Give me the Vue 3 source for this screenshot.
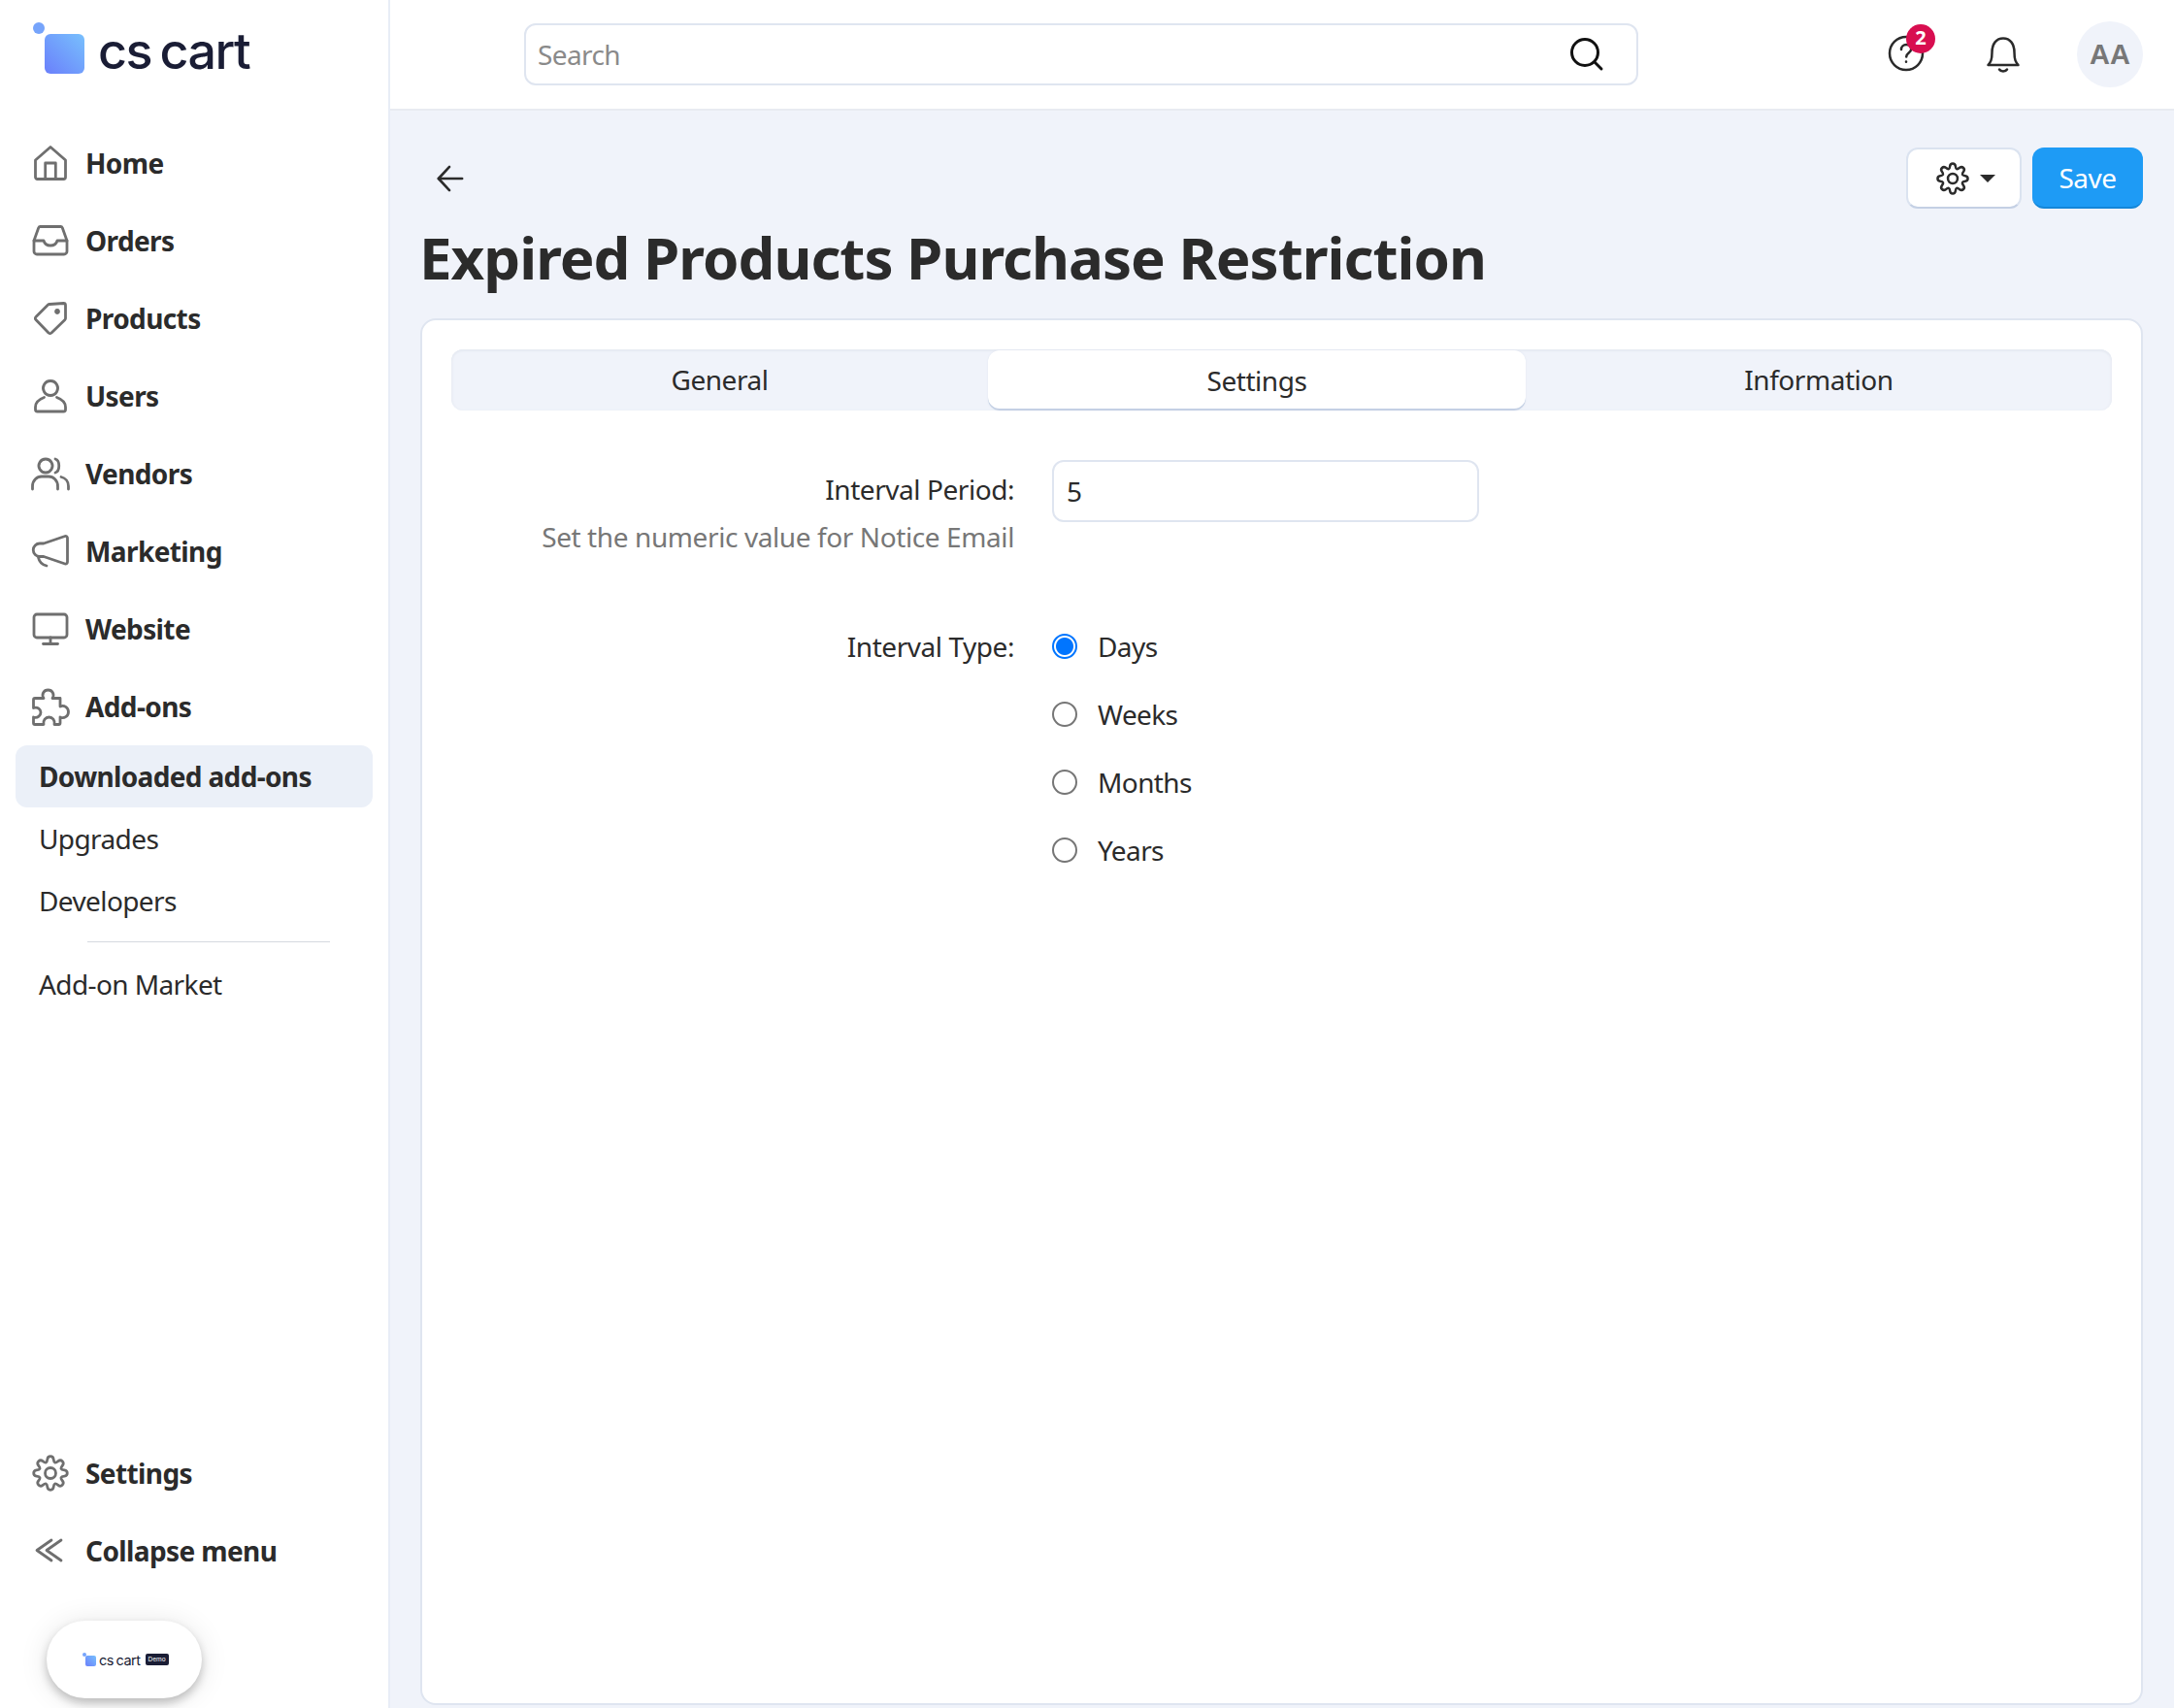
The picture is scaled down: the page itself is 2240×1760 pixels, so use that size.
<template>
  <div class="app">
    <aside class="sidebar">
      <div class="logo">
        <span class="logo-mark"><i class="dot"></i><i class="square"></i></span>
        <span class="logo-text">cs cart</span>
      </div>
      <nav>
        <a v-for="item in nav" :key="item.label" class="nav-row">
          <svg class="nav-icon" viewBox="0 0 40 40" fill="none"><path v-for="d in item.paths" :key="d" :d="d" /></svg>
          <span>{{ item.label }}</span>
        </a>
      </nav>
      <div class="sub active">Downloaded add-ons</div>
      <div class="sub">Upgrades</div>
      <div class="sub">Developers</div>
      <div class="divider"></div>
      <div class="sub">Add-on Market</div>
      <div class="side-foot">
        <a class="nav-row">
          <svg class="nav-icon" viewBox="0 0 40 40" fill="none"><path :d="gear" /><circle cx="20" cy="20" r="5.5" /></svg>
          <span>Settings</span>
        </a>
        <a class="nav-row">
          <svg class="nav-icon" viewBox="0 0 40 40" fill="none"><path d="M21 9 6 19.500 21 30" /><path d="M31 9 16 19.500 31 30" /></svg>
          <span>Collapse menu</span>
        </a>
        <div class="pill">
          <span class="mini-mark"><i class="mini-dot"></i><i class="mini-square"></i></span>
          <span class="mini-text">cs cart</span>
          <span class="mini-badge">Demo</span>
        </div>
      </div>
    </aside>
    <main class="main">
      <header class="topbar">
        <div class="search">
          <span class="search-ph">Search</span>
          <svg class="search-icon" viewBox="0 0 36 36" fill="none"><circle cx="16" cy="16" r="13.5" /><path d="m26 26 7 7" /></svg>
        </div>
        <div class="top-actions">
          <div class="help">
            <svg viewBox="0 0 40 40" fill="none" class="top-icon"><circle cx="20" cy="20" r="17" /><path d="M15 16c0-3 2.300-5 5.200-5s5 2 5 4.500c0 4-5 4-5 8" /><path d="M20 28.500v.2" /></svg>
            <b class="badge">2</b>
          </div>
          <svg viewBox="0 0 40 40" fill="none" class="top-icon bell"><path d="M4.500 31c2.500-3 4-5 4-13C8.500 9 13 3.500 20 3.500S31.500 9 31.500 18c0 8 1.500 10 4 13Z" /><path d="M16 35.500c1.500 2.500 6.500 2.500 8 0" /></svg>
          <div class="avatar">AA</div>
        </div>
      </header>
      <section class="content">
        <div class="toolbar">
          <svg class="back" viewBox="0 0 30 30" fill="none"><path d="M28 15H2" /><path d="M14 2 2 15l12 13" /></svg>
          <div class="tool-btns">
            <button class="btn-gear">
              <svg viewBox="0 0 40 40" fill="none"><path :d="gear" /><circle cx="20" cy="20" r="5.500" /></svg>
              <i class="caret"></i>
            </button>
            <button class="btn-save">Save</button>
          </div>
        </div>
        <h1>Expired Products Purchase Restriction</h1>
        <div class="card">
          <div class="tabs">
            <div class="tab">General</div>
            <div class="tab on">Settings</div>
            <div class="tab">Information</div>
          </div>
          <div class="form">
            <div class="field first">
              <div class="label">
                <div>Interval Period:</div>
                <div class="help-text">Set the numeric value for Notice Email</div>
              </div>
              <div class="input">5</div>
            </div>
            <div class="field">
              <div class="label type-label">Interval Type:</div>
              <div class="radios">
                <label v-for="(o, i) in options" :key="o" class="radio">
                  <i class="circle" :class="{ checked: i === 0 }"></i>{{ o }}
                </label>
              </div>
            </div>
          </div>
        </div>
      </section>
    </main>
  </div>
</template>

<script setup>
function cog(cx, cy, rOut, rIn, teeth) {
  const pts = []
  const step = (Math.PI * 2) / teeth
  for (let i = 0; i < teeth; i++) {
    const a = i * step - Math.PI / 2
    const w = step * 0.2
    ;[[a - w, rOut], [a + w, rOut], [a + step / 2 - w * 0.6, rIn], [a + step / 2 + w * 0.6, rIn]].forEach(([t, r]) =>
      pts.push([cx + r * Math.cos(t), cy + r * Math.sin(t)])
    )
  }
  const mid = (p, q) => [(p[0] + q[0]) / 2, (p[1] + q[1]) / 2]
  const f = (n) => n.toFixed(2)
  const start = mid(pts[pts.length - 1], pts[0])
  let d = `M${f(start[0])} ${f(start[1])}`
  pts.forEach((p, i) => {
    const m = mid(p, pts[(i + 1) % pts.length])
    d += `Q${f(p[0])} ${f(p[1])} ${f(m[0])} ${f(m[1])}`
  })
  return d + 'Z'
}
const gear = cog(20, 20, 17.5, 12, 8)
const options = ['Days', 'Weeks', 'Months', 'Years']
const nav = [
  { label: 'Home', paths: ['M20 3.500 35.500 17V34.500a2 2 0 0 1-2 2H6.500a2 2 0 0 1-2-2V17Z', 'M14.700 36.500V20H25.300V36.500'] },
  { label: 'Orders', paths: ['M9.500 5.500H30.500a2 2 0 0 1 1.800 1.200L37 20V31a3 3 0 0 1-3 3H6a3 3 0 0 1-3-3V20L7.700 6.700a2 2 0 0 1 1.800-1.200Z', 'M3 20H13c1 3.500 3 5 7 5s6-1.500 7-5H37'] },
  { label: 'Products', paths: ['M19 5.500 33.500 4.500a2 2 0 0 1 2 2V20a2 2 0 0 1-.6 1.400L21 35a2.500 2.500 0 0 1-3 0L5 21.500a2 2 0 0 1 0-3L17.500 6a2 2 0 0 1 1.500-.5Z', 'M27 11.500a1.500 1.500 0 1 0 .01 0'] },
  { label: 'Users', paths: ['M20 4.500a7.500 7.500 0 1 0 .01 0Z', 'M13.500 21.500C8 23.500 4.500 27 4.500 31.500V34a2 2 0 0 0 2 2H33.500a2 2 0 0 0 2-2V31.500C35.500 27 32 23.500 26.500 21.500'] },
  { label: 'Vendors', paths: ['M15 5a7 7 0 1 0 .01 0Z', 'M25 5c5 1.500 5 12.500 0 14', 'M1.500 36V33C1.500 27 6 23 11 23H18C23 23 27.500 27 27.500 33V36', 'M31 23.500C35.500 24.500 38.500 28.500 38.500 33V36'] },
  { label: 'Marketing', paths: ['M35 4.500 13 12H9a6.500 6.500 0 0 0 0 13.500H13L35 33a2 2 0 0 0 2.500-2V6.500a2 2 0 0 0-2.500-2Z', 'M7.500 26.500C8.500 31 11.500 34 16 35'] },
  { label: 'Website', paths: ['M6 5H34a3 3 0 0 1 3 3V26a3 3 0 0 1-3 3H6a3 3 0 0 1-3-3V8a3 3 0 0 1 3-3Z', 'M20 29V35.500', 'M12.500 35.500H27.500'] },
  { label: 'Add-ons', paths: ['M4 11.500H13C10.500 7.500 13 3 17.500 3S24.500 7.500 22 11.500H30V20C34 18 38.500 21 38.500 25.500S34 33 30 31V37a1.500 1.500 0 0 1-1.500 1.500H24C25 34 22 31 18.500 31S12 34 13 38.500H4a1.500 1.500 0 0 1-1.500-1.500V31C7 32.500 10 29 10 26S7 20 2.500 21.500V13A1.500 1.500 0 0 1 4 11.500Z'] },
]
</script>

<style scoped>
.app {
  display: flex;
  height: 1760px;
  width: 2240px;
  overflow: hidden;
  font-family: "Noto Sans", sans-serif;
  color: #2b2b2b;
  background: #f0f3fa;
}
.sidebar {
  width: 400px;
  flex: none;
  display: flex;
  flex-direction: column;
  background: #fff;
  border-right: 2px solid #e8edf6;
}
.logo {
  height: 128px;
  flex: none;
  display: flex;
  align-items: flex-start;
  padding: 23px 0 0 34px;
  box-sizing: border-box;
}
.logo-mark {
  position: relative;
  display: block;
  width: 54px;
  height: 54px;
}
.dot {
  position: absolute;
  left: 0;
  top: 0;
  width: 12px;
  height: 12px;
  border-radius: 50%;
  background: #76a4fb;
}
.square {
  position: absolute;
  left: 12px;
  top: 12px;
  width: 41px;
  height: 41px;
  border-radius: 6px;
  background: linear-gradient(45deg, #6a7ffb, #78c0fd);
}
.logo-text {
  font-family: Inter, sans-serif;
  font-weight: 500;
  font-size: 52px;
  line-height: 60px;
  letter-spacing: -1.5px;
  color: #1a1d35;
  margin-left: 13px;
  margin-top: 0;
  word-spacing: -4px;
}
.nav-row {
  height: 80px;
  display: flex;
  align-items: center;
  padding-left: 32px;
  gap: 16px;
  font-weight: 700;
  font-size: 28px;
  letter-spacing: -0.6px;
  color: #2b2b2b;
}
.nav-row span {
  margin-top: -1px;
}
.nav-icon {
  width: 40px;
  height: 40px;
  flex: none;
  stroke: #6f6f6f;
  stroke-width: 2.8;
  stroke-linecap: round;
  stroke-linejoin: round;
}
.sub {
  height: 64px;
  margin: 0 16px;
  padding-left: 24px;
  display: flex;
  align-items: center;
  font-size: 28px;
  letter-spacing: -0.6px;
  color: #2b2b2b;
  border-radius: 12px;
  flex: none;
}
.sub.active {
  background: #ebf0f8;
  font-weight: 700;
  letter-spacing: -0.65px;
}
.divider {
  height: 1px;
  margin: 10px 60px 11px 90px;
  background: #d5d9e0;
  flex: none;
}
.side-foot {
  margin-top: auto;
  padding-bottom: 10px;
}
.pill {
  width: 160px;
  height: 80px;
  margin: 32px 0 0 48px;
  border-radius: 40px;
  background: #fff;
  box-shadow: 0 5px 10px rgba(0, 0, 0, 0.22), 0 2px 30px rgba(0, 0, 0, 0.1);
  display: flex;
  align-items: center;
  padding-left: 37px;
  box-sizing: border-box;
}
.mini-mark {
  position: relative;
  display: block;
  width: 16px;
  height: 16px;
  margin-top: 2px;
}
.mini-dot {
  position: absolute;
  left: 0;
  top: 0;
  width: 4px;
  height: 4px;
  border-radius: 50%;
  background: #76a4fb;
}
.mini-square {
  position: absolute;
  left: 3px;
  top: 3px;
  width: 11px;
  height: 11px;
  border-radius: 2px;
  background: linear-gradient(45deg, #6a7ffb, #78c0fd);
}
.mini-text {
  font-family: Inter, sans-serif;
  font-size: 14.5px;
  font-weight: 400;
  color: #1a1d35;
  letter-spacing: -0.5px;
  margin-left: 1px;
  word-spacing: -1px;
}
.mini-badge {
  font-family: Inter, sans-serif;
  font-size: 6.5px;
  line-height: 12px;
  height: 12px;
  padding: 0 3px;
  margin-left: 5px;
  color: #fff;
  background: #1a1d35;
  border-radius: 2px;
}
.main {
  flex: 1;
  min-width: 0;
  display: flex;
  flex-direction: column;
}
.topbar {
  height: 112px;
  flex: none;
  background: #fff;
  border-bottom: 2px solid #e8ebf1;
  box-sizing: content-box;
  display: flex;
  align-items: center;
  padding-left: 138px;
}
.search {
  width: 1148px;
  height: 64px;
  box-sizing: border-box;
  border: 2px solid #dfe5f0;
  border-radius: 12px;
  display: flex;
  align-items: center;
  justify-content: space-between;
  padding: 0 33px 0 12px;
}
.search-ph {
  font-size: 28px;
  letter-spacing: -0.6px;
  color: #8a8a8a;
  margin-top: -1px;
}
.search-icon {
  width: 36px;
  height: 36px;
  stroke: #111;
  stroke-width: 3;
  stroke-linecap: round;
}
.top-actions {
  display: flex;
  align-items: center;
  margin-left: 256px;
}
.help {
  position: relative;
  width: 40px;
  height: 40px;
  margin-top: -2px;
}
.top-icon {
  display: block;
  width: 40px;
  height: 40px;
  stroke: #2b2b2b;
  stroke-width: 2.5;
  stroke-linecap: round;
  stroke-linejoin: round;
}
.badge {
  position: absolute;
  left: 20px;
  top: -10px;
  width: 30px;
  height: 30px;
  border-radius: 50%;
  background: #d80e50;
  color: #fff;
  font-size: 20px;
  font-weight: 700;
  line-height: 28px;
  text-align: center;
}
.bell {
  margin-left: 60px;
  margin-top: -1px;
}
.avatar {
  width: 68px;
  height: 68px;
  border-radius: 50%;
  margin-left: 56px;
  background: #f0f3fa;
  color: #777;
  font-family: "Liberation Sans", sans-serif;
  font-weight: 700;
  font-size: 29px;
  line-height: 68px;
  text-align: center;
}
.content {
  flex: 1;
  display: flex;
  flex-direction: column;
  padding: 38px 32px 3px 31px;
  min-height: 0;
}
.toolbar {
  height: 63px;
  flex: none;
  display: flex;
  align-items: center;
  justify-content: space-between;
}
.back {
  width: 28px;
  height: 28px;
  margin-left: 17px;
  stroke: #2b2b2b;
  stroke-width: 2.8;
  stroke-linecap: round;
  stroke-linejoin: round;
}
.tool-btns {
  display: flex;
  gap: 11px;
}
.btn-gear {
  width: 119px;
  height: 63px;
  box-sizing: border-box;
  background: #fff;
  border: 2px solid #dbe3f0;
  border-bottom-color: #c4d0e4;
  border-radius: 12px;
  display: flex;
  align-items: center;
  padding: 0 0 0 28px;
}
.btn-gear svg {
  width: 36px;
  height: 36px;
  stroke: #2b2b2b;
  stroke-width: 2.8;
  stroke-linecap: round;
  stroke-linejoin: round;
}
.caret {
  display: block;
  margin-left: 10px;
  border-left: 8px solid transparent;
  border-right: 8px solid transparent;
  border-top: 8px solid #2b2b2b;
}
.btn-save {
  width: 114px;
  height: 63px;
  border: 0;
  border-bottom: 2px solid #1486d8;
  border-radius: 12px;
  background: #1e9bf5;
  color: #fff;
  font-family: inherit;
  font-size: 28px;
  letter-spacing: -0.5px;
  padding: 0;
}
h1 {
  margin: 12px 0 0 -1px;
  height: 101px;
  font-size: 60px;
  line-height: 76px;
  font-weight: 700;
  letter-spacing: -1px;
  color: #2b2b2b;
  flex: none;
}
.card {
  flex: 1;
  min-height: 0;
  background: #fff;
  border: 2px solid #dfe5f0;
  border-radius: 16px;
  padding: 30px 30px;
}
.tabs {
  display: grid;
  grid-template-columns: 553px 554px 1fr;
  height: 63px;
  background: #f0f3fa;
  border-radius: 12px;
  box-shadow: inset 0 2px 2px #e6eaf2, inset 2px 0 2px #eceff6, inset -2px 0 2px #eceff6;
}
.tab {
  display: flex;
  align-items: center;
  justify-content: center;
  font-size: 28px;
  letter-spacing: -0.45px;
  color: #2b2b2b;
  border-radius: 12px;
  padding-bottom: 1px;
}
.tab.on {
  background: #fff;
  box-shadow: inset 0 -2px 0 #c4d0e4, 0 0 2px #dfe5f0;
  margin-top: 1px;
}
.form {
  margin-top: 51px;
}
.field {
  display: grid;
  grid-template-columns: 580px 1fr;
  column-gap: 39px;
  font-size: 28px;
}
.first {
  height: 157px;
}
.label {
  text-align: right;
  line-height: 40px;
  padding-top: 10px;
  letter-spacing: -0.45px;
}
.type-label {
  padding-top: 15px;
}
.help-text {
  color: #777;
  margin-top: 9px;
  letter-spacing: -0.4px;
}
.input {
  width: 440px;
  height: 64px;
  box-sizing: border-box;
  border: 2px solid #dfe5f0;
  border-radius: 12px;
  padding-left: 13px;
  line-height: 60px;
}
.radio {
  height: 70px;
  display: flex;
  align-items: center;
  letter-spacing: -0.6px;
}
.circle {
  width: 26px;
  height: 26px;
  box-sizing: border-box;
  border: 2px solid #767676;
  border-radius: 50%;
  margin-right: 21px;
  background: #fff;
}
.circle.checked {
  border-color: #0075ff;
  background: radial-gradient(circle, #0075ff 0 8.500px, #fff 9.500px);
}
</style>
